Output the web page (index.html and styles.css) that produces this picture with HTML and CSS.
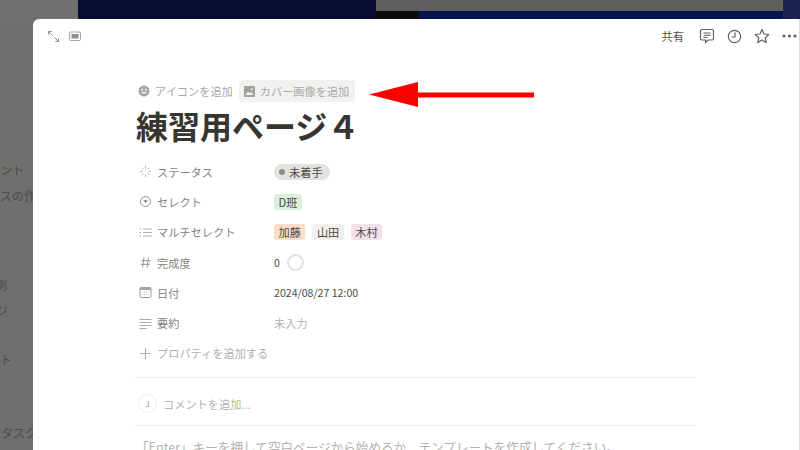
FILE: index.html
```html
<!DOCTYPE html>
<html lang="ja">
<head>
    <meta charset="UTF-8">
    <title>練習用ページ４</title>
    <link rel="stylesheet" href="styles.css">
</head>
<body>
    <!-- dimmed app behind the dialog -->
    <div class="backdrop">
        <div class="top-strip">
            <div class="strip-gray"></div>
            <div class="strip-navy"></div>
            <div class="strip-right">
                <div class="strip-bar"></div>
                <div class="strip-low"><span class="strip-black"></span></div>
            </div>
            <div class="strip-end"></div>
        </div>
        <div class="side-list">
            <div class="side-item cut-2">コメント</div>
            <div class="side-item">スの作成</div>
            <div class="side-item side-gap-1 cut-1">事例</div>
            <div class="side-item cut-3">ページ</div>
            <div class="side-item side-gap-2 cut-2">リスト</div>
            <div class="side-item side-gap-3 shift-1">タスク</div>
        </div>
    </div>

    <div class="modal">
        <div class="modal-bar">
            <div class="bar-left">
                <svg class="bar-icon" width="13" height="13" viewBox="0 0 13 13"><path d="M1.500 1.500l4 4M1.500 1.500v3.200M1.500 1.500h3.200M11.500 11.500l-4-4M11.500 11.500v-3.200M11.500 11.500h-3.200" fill="none" stroke="#8f8f8c" stroke-width="1"/></svg>
                <svg class="bar-icon" width="12" height="11" viewBox="0 0 12 11"><rect x="0.500" y="1" width="11" height="8.500" rx="1.200" fill="none" stroke="#a3a3a0"/><rect x="2.500" y="3" width="7" height="4.500" fill="#8f8f8c"/></svg>
            </div>
            <div class="bar-right">
                <span class="share">共有</span>
                <svg width="16" height="16" viewBox="0 0 16 16"><path d="M3 1.500h10a1.500 1.500 0 0 1 1.500 1.500v7.500a1.500 1.500 0 0 1-1.500 1.500h-4l-2.500 2.500v-2.500h-3.500a1.500 1.500 0 0 1-1.500-1.500v-7.500a1.500 1.500 0 0 1 1.500-1.500z" fill="none" stroke="#5f5f5c" stroke-width="1.200"/><path d="M4.500 5h7M4.500 7.300h7M4.500 9.500h4" stroke="#5f5f5c"/></svg>
                <svg width="15" height="15" viewBox="0 0 15 15"><circle cx="7.500" cy="7.500" r="6.200" fill="none" stroke="#5f5f5c" stroke-width="1.200"/><path d="M8 3.500v4.500h-3.500" fill="none" stroke="#5f5f5c" stroke-width="1.200"/></svg>
                <svg width="16" height="16" viewBox="0 0 16 16"><path d="M8 1.500l2 4.500 4.800.5-3.600 3.200 1.050 4.800-4.250-2.500-4.250 2.500 1.050-4.800-3.600-3.200 4.800-.5z" fill="none" stroke="#5f5f5c" stroke-width="1.200" stroke-linejoin="round"/></svg>
                <svg width="15" height="4" viewBox="0 0 15 4"><circle cx="2" cy="2" r="1.600" fill="#5f5f5c"/><circle cx="7.500" cy="2" r="1.600" fill="#5f5f5c"/><circle cx="13" cy="2" r="1.600" fill="#5f5f5c"/></svg>
            </div>
        </div>

        <div class="page">
            <div class="page-actions">
                <div class="action">
                    <svg width="12" height="12" viewBox="0 0 12 12"><circle cx="6" cy="6" r="5.500" fill="#a8a8a5"/><circle cx="4.100" cy="4.700" r="0.900" fill="#fff"/><circle cx="7.900" cy="4.700" r="0.900" fill="#fff"/><path d="M3.300 7.200c.8 1.700 4.600 1.700 5.400 0z" fill="#fff"/></svg>
                    アイコンを追加
                </div>
                <div class="action action-hover">
                    <svg width="11" height="11" viewBox="0 0 11 11"><rect width="11" height="11" rx="1" fill="#a0a09d"/><path d="M1.500 9l2.500-3.500 1.800 2 1.400-1.500 2.300 3z" fill="#f1f1ef"/><circle cx="7.800" cy="3.300" r="1" fill="#f1f1ef"/></svg>
                    カバー画像を追加
                </div>
            </div>

            <h1 class="title">練習用ページ４</h1>

            <div class="props">
                <div class="prop">
                    <div class="prop-name">
                        <svg width="13" height="13" viewBox="0 0 13 13"><path d="M6.500 1v2.500M6.500 9.500v2.500M1 6.500h2.500M9.500 6.500h2.500M2.800 2.800l1.600 1.600M8.600 8.600l1.600 1.600M2.800 10.200l1.600-1.600M8.600 4.400l1.600-1.600" stroke="#b0b0ad" stroke-width="0.900"/></svg>
                        ステータス
                    </div>
                    <div class="prop-value"><span class="tag tag-status"><i class="dot"></i>未着手</span></div>
                </div>
                <div class="prop">
                    <div class="prop-name">
                        <svg width="13" height="13" viewBox="0 0 13 13"><circle cx="6.500" cy="6.500" r="5" fill="none" stroke="#8f8f8c"/><path d="M4.300 5.300h4.400l-2.200 2.700z" fill="#77776f"/></svg>
                        セレクト
                    </div>
                    <div class="prop-value"><span class="tag tag-green">D班</span></div>
                </div>
                <div class="prop">
                    <div class="prop-name">
                        <svg width="13" height="13" viewBox="0 0 13 13"><path d="M4 3h9M4 6.500h9M4 10h9" stroke="#a9a9a6" stroke-width="0.900"/><path d="M0.500 3h1.500M0.500 6.500h1.500M0.500 10h1.500" stroke="#a9a9a6" stroke-width="1.100"/></svg>
                        マルチセレクト
                    </div>
                    <div class="prop-value">
                        <span class="tag tag-orange">加藤</span>
                        <span class="tag tag-gray">山田</span>
                        <span class="tag tag-pink">木村</span>
                    </div>
                </div>
                <div class="prop">
                    <div class="prop-name">
                        <svg width="13" height="13" viewBox="0 0 13 13"><path d="M5 1.500l-1.500 10M9.500 1.500l-1.500 10M2 4.700h9.500M1.500 8.300h9.500" stroke="#979794" stroke-width="1"/></svg>
                        完成度
                    </div>
                    <div class="prop-value value-number">0<span class="ring"></span></div>
                </div>
                <div class="prop">
                    <div class="prop-name">
                        <svg width="13" height="13" viewBox="0 0 13 13"><rect x="1" y="1.500" width="11" height="10" rx="1.500" fill="none" stroke="#9a9a97"/><rect x="1" y="1.500" width="11" height="2.500" fill="#a3a3a0"/><path d="M3 6h7M3 8.500h7" stroke="#c4c4c1" stroke-dasharray="1 1"/></svg>
                        日付
                    </div>
                    <div class="prop-value value-date">2024/08/27 12:00</div>
                </div>
                <div class="prop">
                    <div class="prop-name">
                        <svg width="13" height="13" viewBox="0 0 13 13"><path d="M0.500 2.500h12M0.500 5.500h12M0.500 8.500h12M0.500 11.500h7" stroke="#a3a3a0" stroke-width="0.900"/></svg>
                        要約
                    </div>
                    <div class="prop-value value-empty">未入力</div>
                </div>
                <div class="prop prop-add">
                    <svg width="13" height="13" viewBox="0 0 13 13"><path d="M6.500 1v11M1 6.500h11" stroke="#b0b0ad" stroke-width="1.200"/></svg>
                    プロパティを追加する
                </div>
            </div>

            <div class="comment-row">
                <span class="avatar">J</span>
                <span>コメントを追加...</span>
            </div>

            <p class="hint">「Enter」キーを押して空白ページから始めるか、テンプレートを作成してください。</p>
        </div>
    </div>

    <svg class="arrow" width="165" height="26" viewBox="0 0 165 26"><path d="M0 12.500L49 0v10.500h116v5H49V25z" fill="#ff0000"/></svg>
</body>
</html>
```

FILE: styles.css
```css
* {
    margin: 0;
    padding: 0;
    box-sizing: border-box;
}

html, body {
    width: 800px;
    height: 450px;
    overflow: hidden;
}

body {
    font-family: 'Noto Sans CJK JP', 'Noto Sans', sans-serif;
    font-size: 11.2px;
    color: #37352f;
    background: #6f6f6d;
}

/* backdrop */
.top-strip {
    display: flex;
    height: 20px;
}

.strip-gray {
    width: 78px;
    background: #707070;
}

.strip-navy {
    width: 298px;
    background: #080b32;
}

.strip-right {
    flex: 1;
    display: flex;
    flex-direction: column;
}

.strip-bar {
    height: 11px;
    background: #5e5e5e;
}

.strip-low {
    flex: 1;
    background: #0a1550;
}

.strip-black {
    display: block;
    width: 43px;
    height: 100%;
    background: #0c0c0c;
}

.strip-end {
    width: 17px;
    background: #1c2450;
}

.side-list {
    width: 33px;
    overflow: hidden;
    padding-top: 141px;
    font-size: 12px;
    color: #4c4c4a;
}

.side-item {
    height: 26px;
    line-height: 18px;
    white-space: nowrap;
}

.cut-1 { margin-left: -17px; }
.cut-2 { margin-left: -24px; }
.cut-3 { margin-left: -28px; }
.shift-1 { margin-left: 1px; }
.side-gap-1 { margin-top: 63px; }
.side-gap-2 { margin-top: 23px; }
.side-gap-3 { margin-top: 47px; }

/* dialog */
.modal {
    position: absolute;
    left: 33px;
    top: 19px;
    width: 767px;
    height: 431px;
    background: white;
    border-radius: 6px 0 0 0;
    border-right: 1px solid #dcdcd0;
    overflow: hidden;
}

.modal-bar {
    display: flex;
    justify-content: space-between;
    align-items: center;
    height: 34px;
    padding: 0 2px 0 14px;
}

.bar-left {
    display: flex;
    align-items: center;
    gap: 9px;
}

.bar-right {
    display: flex;
    align-items: center;
    gap: 12px;
}

.share {
    color: #4f4f4c;
    margin-right: 3px;
}

.page {
    width: 664px;
    padding-left: 102px;
}

.page-actions {
    display: flex;
    align-items: center;
    gap: 6px;
    margin-top: 27px;
    margin-left: 3px;
    color: #a9a9a6;
}

.action {
    display: flex;
    align-items: center;
    gap: 5px;
    height: 22px;
    border-radius: 4px;
    white-space: nowrap;
}

.action-hover {
    background: #f1f1ef;
    padding: 0 6px 0 5px;
}

.title {
    font-size: 32px;
    font-weight: 700;
    line-height: 44px;
    margin-top: 1px;
    margin-left: 1px;
    color: #37352f;
}

.props {
    margin-top: 9.500px;
    padding-bottom: 8px;
    border-bottom: 1px solid #ededeb;
    width: 561px;
}

.prop {
    display: flex;
    align-items: center;
    height: 30.300px;
}

.prop-name {
    display: flex;
    align-items: center;
    gap: 5px;
    width: 139px;
    padding-left: 4px;
    color: #838380;
}

.prop-value {
    display: flex;
    align-items: center;
    gap: 7px;
    color: #4a4a46;
}

.tag {
    display: flex;
    align-items: center;
    height: 16px;
    padding: 0 4.500px;
    border-radius: 3px;
    color: #4a4a46;
}

.tag-status {
    background: #e3e2df;
    border-radius: 8px;
    padding: 0 7px 0 5px;
    gap: 4px;
}

.dot {
    width: 6px;
    height: 6px;
    border-radius: 50%;
    background: #8f8e8a;
}

.tag-green { background: #dbeddb; }
.tag-orange { background: #fadec9; }
.tag-gray { background: #f1f0ee; }
.tag-pink { background: #f5e0e9; }

.value-number {
    gap: 7px;
    font-size: 10.500px;
}

.ring {
    width: 17px;
    height: 17px;
    border: 2px solid #e3e2e0;
    border-radius: 50%;
}

.value-date {
    font-size: 10.600px;
}

.value-empty {
    color: #b3b3b0;
}

.prop-add {
    gap: 5px;
    padding-left: 4px;
    color: #b0b0ad;
}

.comment-row {
    display: flex;
    align-items: center;
    gap: 6px;
    width: 561px;
    height: 48px;
    padding: 5px 0 0 3px;
    border-bottom: 1px solid #ededeb;
    color: #b3b3b0;
}

.avatar {
    display: flex;
    align-items: center;
    justify-content: center;
    width: 19px;
    height: 19px;
    border: 1px solid #eeeeec;
    border-radius: 50%;
    font-size: 8px;
    color: #8f8f8c;
}

.hint {
    margin-top: 11px;
    margin-left: 1px;
    white-space: nowrap;
    font-size: 12.600px;
    color: #b3b3b0;
}

/* annotation drawn over the screenshot */
.arrow {
    position: absolute;
    left: 369px;
    top: 82px;
}
```
